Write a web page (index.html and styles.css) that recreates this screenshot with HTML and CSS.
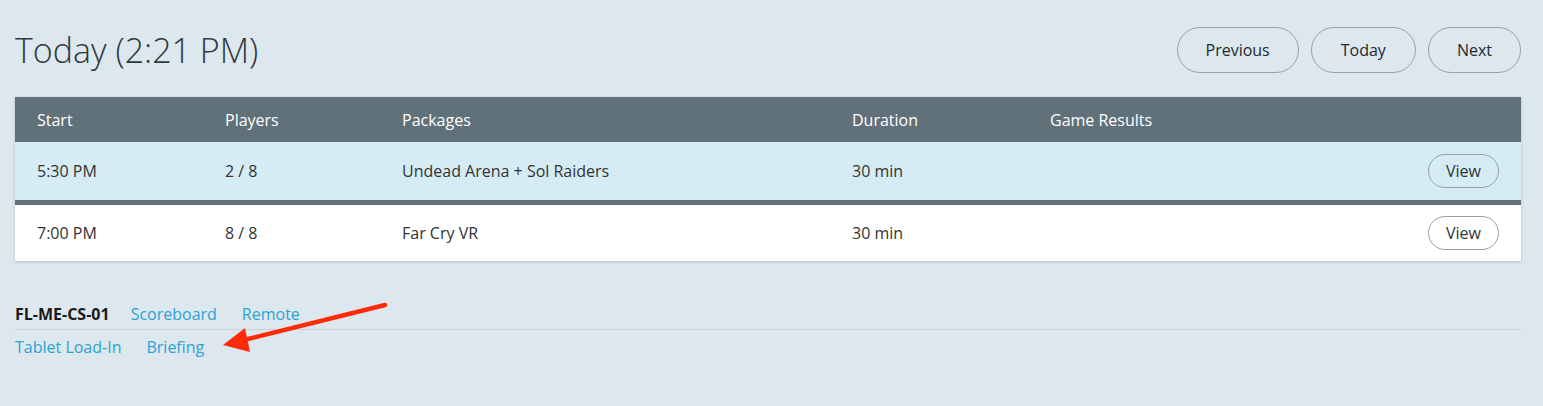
FILE: index.html
```html
<!DOCTYPE html>
<html>
<head>
<meta charset="utf-8">
<link rel="stylesheet" href="styles.css">
</head>
<body>
<div class="page">
  <div class="header">
    <h1 class="title">Today (2:21 PM)</h1>
    <div class="nav">
      <button class="pill">Previous</button>
      <button class="pill">Today</button>
      <button class="pill">Next</button>
    </div>
  </div>
  <div class="table">
    <div class="row head">
      <div>Start</div><div>Players</div><div>Packages</div><div>Duration</div><div>Game Results</div><div></div>
    </div>
    <div class="row current">
      <div>5:30 PM</div><div>2 / 8</div><div>Undead Arena + Sol Raiders</div><div>30 min</div><div></div><div><button class="view">View</button></div>
    </div>
    <div class="row">
      <div>7:00 PM</div><div>8 / 8</div><div>Far Cry VR</div><div>30 min</div><div></div><div><button class="view">View</button></div>
    </div>
  </div>
  <div class="footer">
    <div class="frow first">
      <span class="device">FL-ME-CS-01</span>
      <a class="link">Scoreboard</a>
      <a class="link">Remote</a>
    </div>
    <div class="frow second">
      <a class="link">Tablet Load-In</a>
      <a class="link">Briefing</a>
    </div>
  </div>
  <svg class="arrow" width="1543" height="406" viewBox="0 0 1543 406">
    <line x1="385" y1="305" x2="240" y2="341" stroke="#ff2a0a" stroke-width="4.5" stroke-linecap="round"/>
    <polygon points="223,345 245,328 250,352" fill="#ff2a0a"/>
  </svg>
</div>
</body>
</html>
```
FILE: styles.css
```css
* { box-sizing: border-box; }
html, body { margin: 0; padding: 0; }
body {
  background: #dde7ee;
  font-family: "Open Sans", "Liberation Sans", sans-serif;
  color: #333;
  font-size: 16px;
}
.page {
  position: relative;
  padding: 27px 22px 0 15px;
  height: 406px;
}
.header {
  display: flex;
  align-items: center;
  justify-content: space-between;
  height: 46px;
}
.title {
  margin: 0;
  font-weight: 300;
  font-size: 34px;
  color: #2f3a40;
  line-height: 46px;
}
.nav { display: flex; gap: 12px; }
.pill {
  height: 46px;
  padding: 0 28px;
  border: 1px solid #9a9fa3;
  border-radius: 23px;
  background: transparent;
  font-family: inherit;
  font-size: 16px;
  font-weight: 500;
  color: #222a2f;
}
.nav .pill:nth-child(2) { padding: 0 29px; }
.nav .pill:nth-child(3) { padding: 0 28px; }
.table {
  margin-top: 24px;
  background: #fff;
  box-shadow: 0 1px 3px rgba(0,0,0,0.18);
}
.row {
  display: grid;
  grid-template-columns: 188px 177px 450px 198px 1fr auto;
  align-items: center;
  padding: 0 22px;
  height: 56px;
}
.row.head {
  background: #617179;
  color: #fff;
  height: 45px;
}
.row.current {
  background: #d6ecf5;
  border-bottom: 5px solid #617179;
  height: 63px;
}
.view {
  height: 34px;
  width: 71px;
  border: 1px solid #9a9fa3;
  border-radius: 17px;
  background: transparent;
  font-family: inherit;
  font-size: 16px;
  color: #2c3439;
  display: block;
}
.footer { margin-top: 38px; }
.frow {
  display: flex;
  align-items: center;
  gap: 25px;
}
.frow.first {
  border-bottom: 1px solid #c7d3da;
  height: 31px;
}
.frow.second { height: 34px; }
.device { font-weight: 700; color: #1a1a1a; margin-right: -4px; }
.link { color: #2ea3d3; cursor: pointer; }
.arrow {
  position: absolute;
  left: 0;
  top: 0;
  pointer-events: none;
}
```
